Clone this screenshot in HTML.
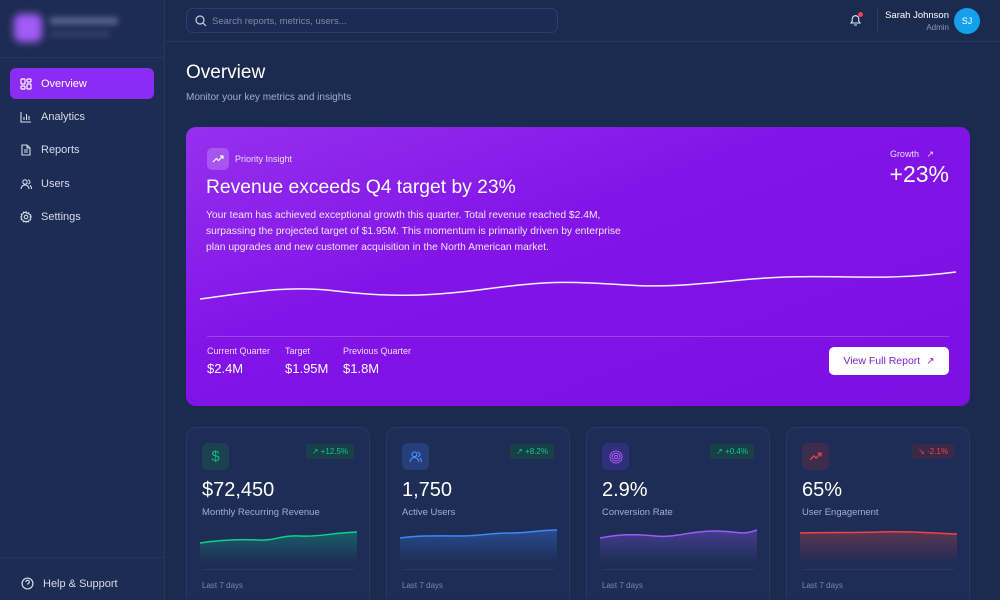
<!DOCTYPE html>
<html style="width:1000px;height:600px;overflow:hidden"><head><meta charset="utf-8"><style>
*{box-sizing:border-box;margin:0;padding:0}
body{width:1000px;height:600px;overflow:hidden;background:#1b2a4f;font-family:"Liberation Sans",sans-serif;color:#fff;position:relative}
.abs{position:absolute}
.sb{left:0;top:0;width:165px;height:600px;background:#1d2c53;border-right:1px solid #263660}
.nav{position:absolute;left:10px;width:144px;height:31px;border-radius:6px;font-size:11px;color:#d6dcec;display:flex;align-items:center;padding-left:10px}
.nav svg{margin-right:9px}
.nav.on{background:#8b2cf5;color:#fff}
.card{position:absolute;top:427px;width:184px;height:172px;border-radius:10px 10px 0 0;background:#1e2d56;border:1px solid #273865;border-bottom:none}
.ic{position:absolute;left:15px;top:15px;width:27px;height:27px;border-radius:6px;display:flex;align-items:center;justify-content:center}
.bd{position:absolute;right:15px;top:16px;height:15px;border-radius:3px;font-size:8px;display:flex;align-items:center;padding:0 6px;gap:4px}
.val{position:absolute;left:15px;top:51px;font-size:20px}
.lb{position:absolute;left:15px;top:79px;font-size:9.5px;color:#a3aecb}
.ch{position:absolute;left:13px;top:100px}
.dv{position:absolute;left:15px;right:15px;top:141px;border-top:1px solid #283963}
.l7{position:absolute;left:15px;top:153px;font-size:8px;color:#7b87a6}
</style></head><body>
<div class="abs sb">
 <div class="abs" style="left:14px;top:14px;width:28px;height:28px;border-radius:7px;background:#a35cf6;filter:blur(4px)"></div>
 <div class="abs" style="left:50px;top:17px;width:68px;height:8px;background:#56608a;filter:blur(3px)"></div>
 <div class="abs" style="left:50px;top:31px;width:60px;height:6px;background:#34406a;filter:blur(3px)"></div>
 <div class="abs" style="left:0;top:57px;width:165px;border-top:1px solid #263660"></div>
 <div class="nav on" style="top:68px"><svg width="12" height="12" viewBox="0 0 12 12" fill="none" stroke="#fff" stroke-width="1.2"><rect x="1" y="1" width="4" height="5" rx=".8"/><rect x="7" y="1" width="4" height="3" rx=".8"/><rect x="7" y="6" width="4" height="5" rx=".8"/><rect x="1" y="8" width="4" height="3" rx=".8"/></svg>Overview</div>
 <div class="nav" style="top:101px"><svg width="12" height="12" viewBox="0 0 12 12" fill="none" stroke="#d6dcec" stroke-width="1.1"><path d="M1 1v10h10M4 9V6M6.5 9V3M9 9V5"/></svg>Analytics</div>
 <div class="nav" style="top:134px"><svg width="12" height="12" viewBox="0 0 12 12" fill="none" stroke="#d6dcec" stroke-width="1.1"><path d="M2 1h5l3 3v7H2zM7 1v3h3M4 6h4M4 8h4"/></svg>Reports</div>
 <div class="nav" style="top:168px"><svg width="12" height="12" viewBox="0 0 12 12" fill="none" stroke="#d6dcec" stroke-width="1.1"><circle cx="5" cy="4" r="2.2"/><path d="M1 11c0-2.5 2-4 4-4s4 1.5 4 4M8 2a2 2 0 010 4M10 7.5c1 .6 1.5 1.8 1.5 3.5"/></svg>Users</div>
 <div class="nav" style="top:201px"><svg width="12" height="12" viewBox="0 0 12 12" fill="none" stroke="#d6dcec" stroke-width="1.1"><circle cx="6" cy="6" r="1.8"/><path d="M6 .8l1 1.5 1.7-.5.4 1.7 1.7.5-.5 1.7L11.2 6l-1 1 .5 1.7-1.7.4-.5 1.7-1.5-.5L6 11.2l-1-1-1.7.5-.4-1.7-1.7-.5.5-1.5L.8 6l1-1-.5-1.7 1.7-.4.5-1.7 1.5.5z"/></svg>Settings</div>
 <div class="abs" style="left:0;top:557px;width:165px;border-top:1px solid #263660"></div>
 <div class="nav" style="top:568px;left:11px"><svg width="13" height="13" viewBox="0 0 12 12" fill="none" stroke="#d6dcec" stroke-width="1.1"><circle cx="6" cy="6" r="5"/><path d="M4.5 4.6a1.6 1.6 0 113 .8c-.6.4-1.5.7-1.5 1.6M6 8.6v.2"/></svg>Help &amp; Support</div>
</div>
<div class="abs" style="left:166px;top:41px;width:834px;border-top:1px solid #263660"></div>
<div class="abs" style="left:186px;top:8px;width:372px;height:25px;border:1px solid #2e3f6a;border-radius:7px;background:#1c2b51;font-size:9.5px;color:#7f8aa9;padding:7px 0 0 25px">Search reports, metrics, users...
 <svg class="abs" style="left:8px;top:6px" width="12" height="12" viewBox="0 0 12 12" fill="none" stroke="#c9d0e2" stroke-width="1.2"><circle cx="5" cy="5" r="4"/><path d="M8 8l3 3"/></svg></div>
<svg class="abs" style="left:849px;top:13px" width="13" height="14" viewBox="0 0 13 14" fill="none" stroke="#e3e7f0" stroke-width="1.1"><path d="M2 10h9l-1.2-1.6V6a3.3 3.3 0 00-6.6 0v2.4zM5 12h3"/></svg>
<div class="abs" style="left:858px;top:12px;width:5px;height:5px;border-radius:50%;background:#ef4444"></div>
<div class="abs" style="left:877px;top:8px;height:25px;border-left:1px solid #2a3a64"></div>
<div class="abs" style="right:51px;top:10px;font-size:9.5px;text-align:right;line-height:12px">Sarah Johnson<br><span style="color:#8c97b4;font-size:8px">Admin</span></div>
<div class="abs" style="left:954px;top:8px;width:26px;height:26px;border-radius:50%;background:linear-gradient(135deg,#1d9bf0,#0ea5e9);font-size:9px;display:flex;align-items:center;justify-content:center">SJ</div>
<div class="abs" style="left:186px;top:62px;font-size:19px">Overview</div>
<div class="abs" style="left:186px;top:92px;font-size:10px;color:#a2adc8">Monitor your key metrics and insights</div>
<div class="abs" style="left:186px;top:127px;width:784px;height:279px;border-radius:10px;background:linear-gradient(160deg,#9630ee 0%,#8314e8 40%,#7d0fe2 100%);overflow:hidden">
 <div class="abs" style="left:21px;top:21px;width:22px;height:22px;border-radius:5px;background:rgba(255,255,255,.2)"><svg style="margin:5px" width="12" height="12" viewBox="0 0 12 12" fill="none" stroke="#fff" stroke-width="1.2"><path d="M1 9l3.5-3.5 2 2L11 3M8 3h3v3"/></svg></div>
 <div class="abs" style="left:49px;top:27px;font-size:9px;color:#eadcff">Priority Insight</div>
 <div class="abs" style="left:20px;top:50px;font-size:19.3px">Revenue exceeds Q4 target by 23%</div>
 <div class="abs" style="left:20px;top:81px;width:428px;font-size:10.3px;line-height:16px;color:#f0e6ff">Your team has achieved exceptional growth this quarter. Total revenue reached $2.4M, surpassing the projected target of $1.95M. This momentum is primarily driven by enterprise plan upgrades and new customer acquisition in the North American market.</div>
 <div class="abs" style="right:36px;top:22px;font-size:9px;color:#eadcff">Growth <span style="margin-left:5px">↗</span></div>
 <div class="abs" style="right:21px;top:34px;font-size:23px">+23%</div>
 <svg class="abs" style="left:0;top:130px" width="784" height="50" viewBox="0 0 784 50"><path d="M14 42C60 36 100 28 150 34S240 40 300 32 380 24 440 28 540 22 600 20 700 24 770 15" fill="none" stroke="#fff" stroke-width="1.5" opacity=".95"/></svg>
 <div class="abs" style="left:21px;top:209px;width:742px;border-top:1px solid rgba(255,255,255,.2)"></div>
 <div class="abs" style="left:21px;top:219px;font-size:9px;color:#eadcff">Current Quarter</div>
 <div class="abs" style="left:21px;top:234px;font-size:13px">$2.4M</div>
 <div class="abs" style="left:99px;top:219px;font-size:9px;color:#eadcff">Target</div>
 <div class="abs" style="left:99px;top:234px;font-size:13px">$1.95M</div>
 <div class="abs" style="left:157px;top:219px;font-size:9px;color:#eadcff">Previous Quarter</div>
 <div class="abs" style="left:157px;top:234px;font-size:13px">$1.8M</div>
 <div class="abs" style="left:643px;top:220px;width:120px;height:28px;background:#fff;border-radius:5px;color:#7e22ce;font-size:10.5px;display:flex;align-items:center;justify-content:center;gap:6px">View Full Report <span style="font-size:10px">↗</span></div>
</div>

<div class="card" style="left:186px"><div class="ic" style="background:#1c4150;color:#10b981;font-size:15px">$</div><div class="bd" style="background:#184049;color:#10c98f">↗ +12.5%</div><div class="val">$72,450</div><div class="lb">Monthly Recurring Revenue</div>
<svg class="ch" width="158" height="40" viewBox="0 0 158 40"><defs><linearGradient id="g1" x1="0" y1="0" x2="0" y2="1"><stop offset="0" stop-color="#10b981" stop-opacity=".35"/><stop offset="1" stop-color="#10b981" stop-opacity="0"/></linearGradient></defs><path d="M0 15C20 12 40 11 58 12S80 7 100 8 130 5 157 4V35H0z" fill="url(#g1)"/><path d="M0 15C20 12 40 11 58 12S80 7 100 8 130 5 157 4" fill="none" stroke="#10d08f" stroke-width="1.5"/></svg><div class="dv"></div><div class="l7">Last 7 days</div></div>

<div class="card" style="left:386px"><div class="ic" style="background:#253f7a"><svg width="13" height="13" viewBox="0 0 12 12" fill="none" stroke="#4f8df5" stroke-width="1.1"><circle cx="5" cy="4" r="2.2"/><path d="M1 11c0-2.5 2-4 4-4s4 1.5 4 4M8 2a2 2 0 010 4M10 7.5c1 .6 1.5 1.8 1.5 3.5"/></svg></div><div class="bd" style="background:#184049;color:#10c98f">↗ +8.2%</div><div class="val">1,750</div><div class="lb">Active Users</div>
<svg class="ch" width="158" height="40" viewBox="0 0 158 40"><defs><linearGradient id="g2" x1="0" y1="0" x2="0" y2="1"><stop offset="0" stop-color="#3b82f6" stop-opacity=".35"/><stop offset="1" stop-color="#3b82f6" stop-opacity="0"/></linearGradient></defs><path d="M0 10C20 7 40 8 60 8S90 5 110 5 140 2 157 2V35H0z" fill="url(#g2)"/><path d="M0 10C20 7 40 8 60 8S90 5 110 5 140 2 157 2" fill="none" stroke="#3b8af6" stroke-width="1.5"/></svg><div class="dv"></div><div class="l7">Last 7 days</div></div>

<div class="card" style="left:586px"><div class="ic" style="background:#30307a"><svg width="14" height="14" viewBox="0 0 14 14" fill="none" stroke="#a855f7" stroke-width="1.1"><circle cx="7" cy="7" r="6"/><circle cx="7" cy="7" r="3.8"/><circle cx="7" cy="7" r="1.6"/></svg></div><div class="bd" style="background:#184049;color:#10c98f">↗ +0.4%</div><div class="val">2.9%</div><div class="lb">Conversion Rate</div>
<svg class="ch" width="158" height="40" viewBox="0 0 158 40"><defs><linearGradient id="g3" x1="0" y1="0" x2="0" y2="1"><stop offset="0" stop-color="#8b5cf6" stop-opacity=".35"/><stop offset="1" stop-color="#8b5cf6" stop-opacity="0"/></linearGradient></defs><path d="M0 10C20 6 35 6 55 8S90 3 115 3 140 8 157 2V35H0z" fill="url(#g3)"/><path d="M0 10C20 6 35 6 55 8S90 3 115 3 140 8 157 2" fill="none" stroke="#9b5cf6" stroke-width="1.5"/></svg><div class="dv"></div><div class="l7">Last 7 days</div></div>

<div class="card" style="left:786px"><div class="ic" style="background:#3e2c4e"><svg width="13" height="13" viewBox="0 0 12 12" fill="none" stroke="#ef4444" stroke-width="1.2"><path d="M1 9l3.5-3.5 2 2L11 3M8 3h3v3"/></svg></div><div class="bd" style="background:#3a2a48;color:#ef4444">↘ -2.1%</div><div class="val">65%</div><div class="lb">User Engagement</div>
<svg class="ch" width="158" height="40" viewBox="0 0 158 40"><defs><linearGradient id="g4" x1="0" y1="0" x2="0" y2="1"><stop offset="0" stop-color="#ef4444" stop-opacity=".3"/><stop offset="1" stop-color="#ef4444" stop-opacity="0"/></linearGradient></defs><path d="M0 5C30 4 50 5 80 4S130 5 157 6V35H0z" fill="url(#g4)"/><path d="M0 5C30 4 50 5 80 4S130 5 157 6" fill="none" stroke="#ef4444" stroke-width="1.5"/></svg><div class="dv"></div><div class="l7">Last 7 days</div></div>
</body></html>
